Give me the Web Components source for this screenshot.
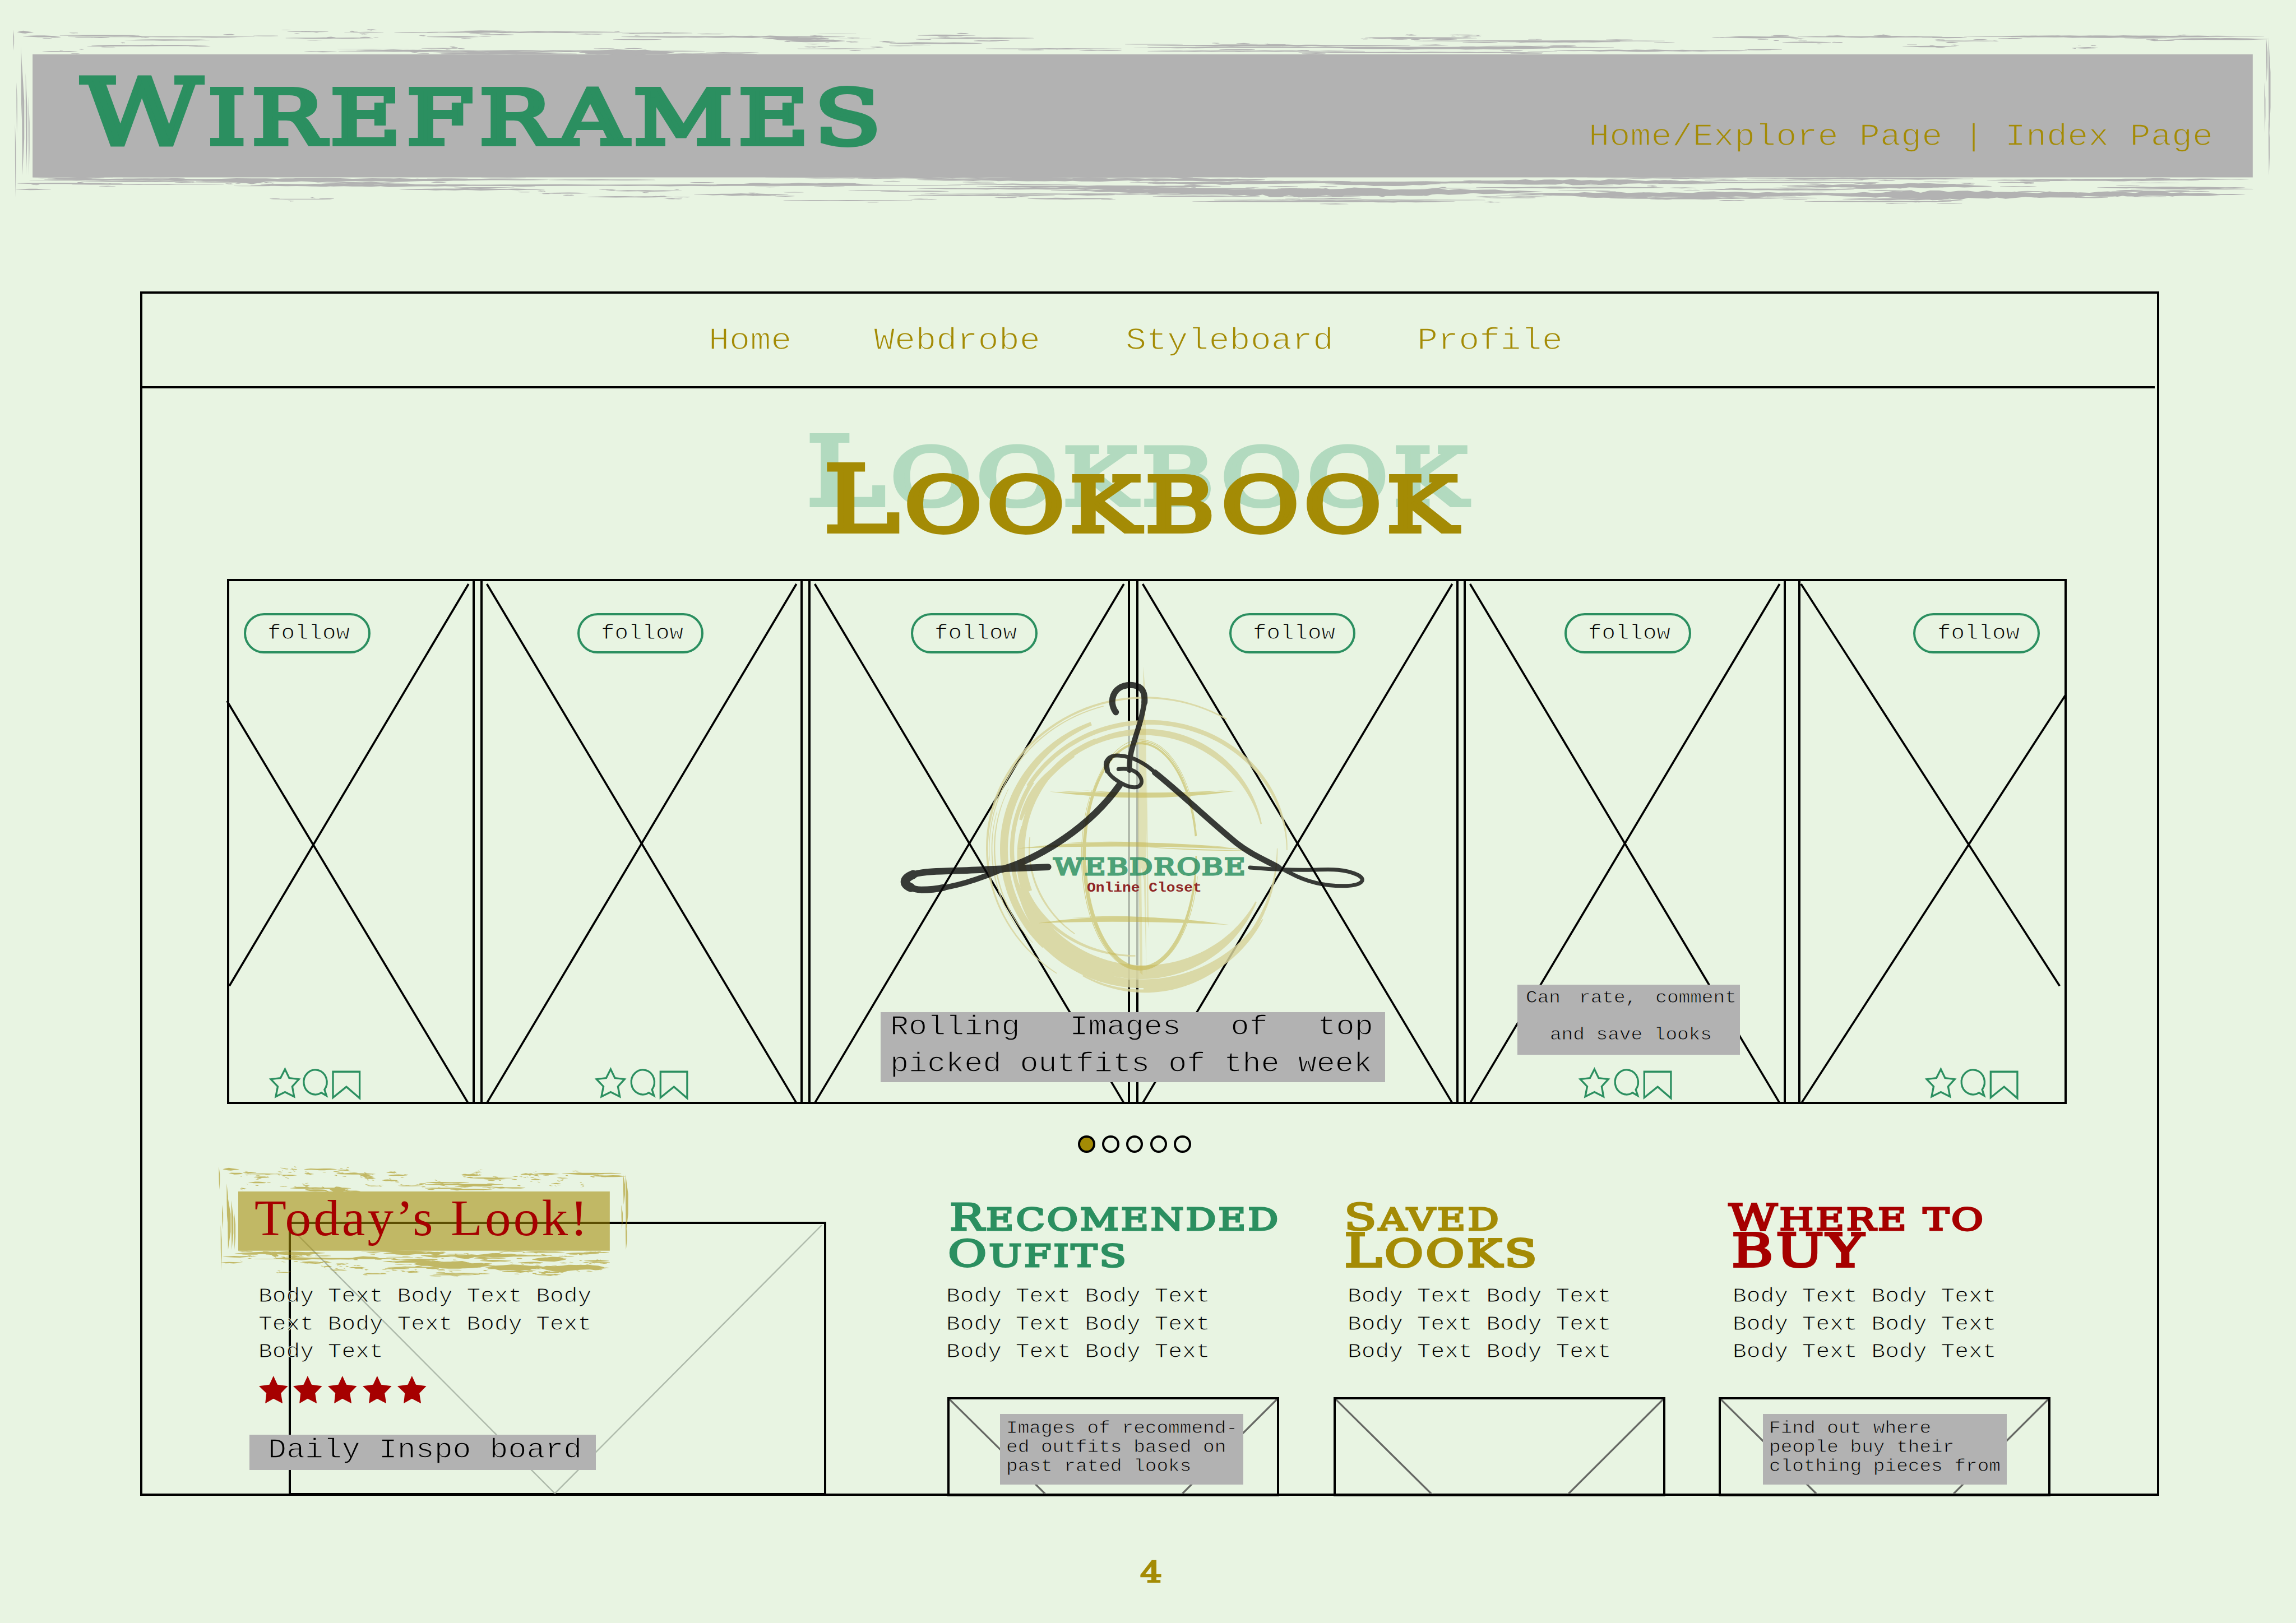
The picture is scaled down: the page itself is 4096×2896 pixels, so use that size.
<!DOCTYPE html>
<html lang="en">
<head>
<meta charset="utf-8">
<title>Wireframes</title>
<style>
  /* 1rem is one hundred units of the 4962-unit-wide board */
  html { font-size: calc(100vw / 49.62); background: #e8f4e2; }
  body { margin: 0; overflow: hidden; }
</style>
</head>
<body>
<wire-page></wire-page>
<script>
const GREEN = '#2b8f60', GOLD = '#a48b05', RED = '#a60000', GREY = '#b2b2b2', PAPER = '#e8f4e2';
const rem = n => (n / 100).toFixed(4) + 'rem';
const f1 = n => n.toFixed(1);

class Part extends HTMLElement {
  connectedCallback() {
    if (!this.shadowRoot) this.attachShadow({ mode: 'open' });
    this.shadowRoot.innerHTML = this.render();
  }
  num(name, fallback = 0) { return this.hasAttribute(name) ? parseFloat(this.getAttribute(name)) : fallback; }
  str(name, fallback = '') { return this.getAttribute(name) ?? fallback; }
}

/* Courier-like lines, separated by "~"; asc = box top to first baseline */
class MonoText extends Part {
  render() {
    const lines = this.str('text').split('~');
    const size = this.num('size', 50), lead = this.num('lead', size * 1.2), asc = this.num('asc', size * .75);
    const sy = .9, pitch = size * .6;
    const ws = this.str('ws').split(','), dx = this.str('dx').split(',');
    const w = Math.max(...lines.map((l, i) => l.length * pitch + (parseFloat(ws[i]) || 0) * (l.split(' ').length - 1)));
    const h = this.num('h', asc + lead * (lines.length - 1) + size * .25);
    const under = this.str('under', PAPER);
    const thin = `stroke="${under}" stroke-width="${(size * .028).toFixed(2)}"`;
    return `<style>:host{display:block;width:${rem(w)};height:${rem(h)}}svg{display:block;overflow:visible;width:100%;height:100%}
      text{font-family:"Liberation Mono","Courier New",monospace}</style>
      <svg viewBox="0 0 ${f1(w)} ${f1(h)}" preserveAspectRatio="xMinYMin">${lines.map((l, i) =>
        `<text transform="translate(${parseFloat(dx[i]) || 0} ${f1(asc + i * lead)}) scale(1 ${sy})" font-size="${size}" fill="${this.str('color', '#000')}" ${thin} word-spacing="${parseFloat(ws[i]) || 0}">${l}</text>`).join('')}</svg>`;
  }
}

/* Engraved small-caps lettering; capitals use the full height, lower-case letters the reduced one */
class PlateText extends Part {
  render() {
    const w = this.num('w'), cap = this.num('cap'), asc = this.num('asc', cap), h = this.num('h', asc);
    /* the outline thickens the hairlines, so the glyphs are drawn that much smaller */
    const sw = cap * .062, big = (cap - sw) / .729, small = big * this.num('ratio', .825);
    const body = this.str('text').replace(/[a-z ]+/g, m => `<tspan font-size="${f1(small)}">${m}</tspan>`);
    return `<style>:host{display:block;width:${rem(w)};height:${rem(h)}}svg{display:block;overflow:visible;width:100%;height:100%}
      text{font-family:"DejaVu Serif",serif;font-weight:400;text-transform:uppercase}</style>
      <svg viewBox="0 0 ${w} ${h}" preserveAspectRatio="xMinYMin"><text x="0" y="${f1(asc - sw / 2)}" font-size="${f1(big)}" fill="${this.str('color')}" stroke="${this.str('color')}" stroke-width="${f1(sw)}" letter-spacing="${f1(cap * .06)}" textLength="${w}" lengthAdjust="spacingAndGlyphs">${body}</text></svg>`;
  }
}

class SerifText extends Part {
  render() {
    const w = this.num('w'), size = this.num('size'), asc = this.num('asc'), h = this.num('h', asc);
    return `<style>:host{display:block;width:${rem(w)};height:${rem(h)}}svg{display:block;overflow:visible;width:100%;height:100%}
      text{font-family:"Liberation Serif","Times New Roman",serif}</style>
      <svg viewBox="0 0 ${w} ${h}"><text y="${asc}" font-size="${size}" fill="${this.str('color')}" letter-spacing="${this.num('ls')}" textLength="${w}" lengthAdjust="spacingAndGlyphs">${this.str('text')}</text></svg>`;
  }
}

/* Panel with dry-brush edges. Streaks are [x0, x1, y, thickness]; x runs 0..1000 along the
   panel, y is the distance from its top (negative) or bottom (positive) edge. */
const TOP_STREAKS = [[-8,0,-48,4],[216,251,-49,1.2],[265,298,-48,1],[335,500,-48,3],[500,560,-46,1.5],[23,90,-41,2],[-5,22,-39,3],[30,188,-38,1.3],
 [78,150,-31,2.4],[50,140,-19,3],[8,37,-6,1.8],[215,288,-35,2],[335,378,-38,2.4],[500,690,-38,3.4],[620,672,-34,5],[640,690,-29,4],[752,800,-41,2.4],
 [762,850,-35,2.2],[728,806,-24,3],[260,570,-7,3],[464,545,-4,10],[340,450,-3,3.6],[530,615,-1,1.6],[275,355,-9,1.5],[810,925,-12,1.4],[650,715,-12,1],[330,360,-13,1]]
 .map(([a, b, y, t]) => [a < 0 ? a : a * .53, b * .53, y, t]).concat([
 [600,646,-36,2],[602,650,-35,1.7],[638,652,-42,1.2],[760,795,-37,4],[795,860,-38,3],[870,1003,-39,2.4],[890,980,-38,3.6],[960,1004,-33,3],
 [622,735,-29,2],[660,715,-27,1.8],[502,620,-19,2.8],[520,556,-19,3.4],[502,712,-15,1.8],[590,683,-13,4],[685,772,-8,3],[502,600,-7,2],[570,680,-4,2],
 [842,866,-17,1.8],[857,883,-29,1.4],[788,810,-26,1.8],[920,930,-14,2]]);
const BOTTOM_STREAKS = [[0,36,1,2],[5,232,5,5],[75,198,6,6],[-2,110,6,1.8],[88,105,9,8],[128,165,12,3],[98,418,17,2.6],[98,210,17,5],[308,378,15,5],[-8,35,13,2.2],
 [165,230,26,3],[-9,8,26,2],[108,134,47,1],[330,520,1,2.5],[398,530,5,6],[425,530,20,4],[398,550,24,4],[472,560,29,9],[298,340,37,3.4],[400,560,36,2],[448,486,46,3],
 [228,250,34,2],[260,292,29,2],[338,396,50,1.4],[250,288,42,2],[394,460,39,2],[502,555,5,5.5],[502,830,11,3.6],[635,760,10,9],[582,634,14,6],[500,680,31,13],
 [520,645,33,15],[665,830,36,8],[680,800,38,9],[810,996,37,9],[808,914,38,15],[910,984,36,8],[790,882,19,7.6],[650,734,22,3],[502,535,19,1.6],[825,874,16,5],
 [930,996,22,3],[945,1000,25,2],[880,970,6,3.4],[772,874,3,3],[710,786,45,3.4],[815,864,47,3.2],[522,640,52,1.8],[798,864,52,1.6],[532,654,49,1.8],[502,568,13,2],[752,820,26,3],
 [930,998,4,2],[700,770,1,2]];
const SIDES = [[-41,-54,-8,1],[-24,-18,140,1.4],[-34,60,170,1],[-22,20,262,4],[-14,40,262,2.4],[-8,90,262,1.4],[-37,150,290,1]];
const SIDES_R = [[35,-37,190,3.4],[30,-37,60,2],[26,60,170,1.4],[35,140,262,1.6]];

class BrushPanel extends Part {
  render() {
    const w = this.num('w'), h = this.num('h'), alpha = this.num('alpha', 1), color = this.str('color');
    let seed = 41;
    const rnd = () => (seed = (seed * 16807) % 2147483647) / 2147483647;
    const sliver = (x0, x1, y, t) => {
      const n = Math.max(5, Math.min(34, Math.round((x1 - x0) / 20)));
      const up = [], dn = [];
      for (let i = 0; i <= n; i++) {
        const k = i / n, x = x0 + (x1 - x0) * k, p = Math.pow(Math.sin(Math.PI * k), .7) * t / 2;
        up.push(`${f1(x)},${f1(y - p * (.45 + rnd() * .8) - .3)}`);
        dn.unshift(`${f1(x + rnd() * 5)},${f1(y + p * (.45 + rnd() * .8) + .3)}`);
      }
      return 'M' + up.concat(dn).join('L') + 'Z';
    };
    let d = '';
    const X = v => v < 0 ? v * 4.2 : v > 1000 ? w + (v - 1000) * 8 : v / 1000 * w;
    const add = (list, oy) => list.forEach(([a, b, y, t]) => {
      d += sliver(X(a), X(b), oy + y, t * 1.2);
      /* stray bristles beside every main streak */
      const m = t > 3 ? 6 : 4;
      for (let i = 0; i < m; i++) {
        const c = a + (b - a) * (rnd() * 1.3 - .15), l = (b - a) * (.05 + rnd() * .2);
        const yy = y + (rnd() - .5) * (t + 10), tt = .5 + rnd() * 1.5;
        if (c > 985 || c < 0) continue;
        if (oy ? yy > 0 : yy < -1) d += sliver(X(Math.max(-6, c - l / 2)), X(Math.min(998, c + l / 2)), oy + yy, tt);
      }
    });
    add(TOP_STREAKS, 0);
    add(BOTTOM_STREAKS, h);
    const k = this.num('side', 1), s = h / 266;
    SIDES.concat(SIDES_R.map(([x, a, b, t]) => [x + w, a, b, t])).forEach(([x, a, b, t]) => {
      const y0 = a < 0 ? a : a * s, y1 = b > 262 ? h + b - 262 + 15 : b * s, q = t * k;
      d += `M${x - 1},${f1(y0)}L${f1(x + q)},${f1((y0 * 2 + y1) / 3)}L${f1(x + q)},${f1((y0 + y1 * 2) / 3)}L${x},${f1(y1)}L${f1(x - .8)},${f1((y0 + y1) / 2)}Z`;
    });
    return `<style>
      :host{display:block;position:relative;width:${rem(w)};height:${rem(h)}}
      svg{position:absolute;inset:0;width:100%;height:100%;overflow:visible}
      .in{position:relative;display:flex;height:100%;justify-content:space-between;align-items:flex-start}
    </style>
    <svg viewBox="0 0 ${w} ${h}" fill="${color}" opacity="${alpha}"><path d="M0 0H${w}V${h}H0Z"/><path d="${d}"/></svg>
    <div class="in"><slot></slot></div>`;
  }
}

class FollowPill extends Part {
  render() {
    return `<style>:host{box-sizing:border-box;display:flex;align-items:flex-start;width:2.735rem;height:.87rem;border:.0485rem solid ${GREEN};border-radius:.44rem;padding:.14rem 0 0 .465rem}</style>
      <mono-text text="follow" size="49.5" asc="38"></mono-text>`;
  }
}

class RateIcons extends Part {
  render() {
    const g = this.num('gap', 0);
    return `<style>:host{display:block;width:2.4rem;height:.72rem}svg{display:block;width:100%;height:100%;overflow:visible}</style>
      <svg viewBox="60 48 720 216" fill="none" stroke="${GREEN}" stroke-width="12" stroke-miterlimit="10">
        <path d="M167 62 194 119 257 127 214 174 226 240 167 210 107 240 120 174 75 127 138 119Z"/>
        <g transform="translate(${g * 3} 0)">
          <path d="M402 214.500A75 80 0 1 1 423 194.500L436 234Z"/>
          <path d="M478 78H651V250L565 176 478 246Z"/>
        </g>
      </svg>`;
  }
}

class LookCard extends Part {
  render() {
    const l = this.num('left'), w = this.num('width');
    const segs = this.str('lines').split(';').map(s => { const p = s.split(','); return `<path d="M${p[0]} ${p[1]}L${p[2]} ${p[3]}"/>`; }).join('');
    const icons = this.hasAttribute('icons') ? `<rate-icons gap="${this.num('gap', 4)}" style="margin-left:${rem(this.num('icons') - l - 5)}"></rate-icons>` : '';
    return `<style>
      :host{box-sizing:border-box;position:relative;display:flex;flex-direction:column;justify-content:space-between;height:100%;padding:.69rem 0 .035rem;border:solid #000;border-width:0 .0485rem}
      svg{position:absolute;left:-.0485rem;top:0;width:${rem(w)};height:${rem(1131)};overflow:visible}
      follow-pill,rate-icons{position:relative}
    </style>
    <svg viewBox="${l} 1256 ${w} 1131" stroke="#000" stroke-width="4.4">${segs}</svg>
    <follow-pill style="margin-left:${rem(this.num('pill') - l - 5)}"></follow-pill>${icons}`;
  }
}

class NoteBox extends Part {
  render() {
    return `<style>:host{display:block;box-sizing:border-box;background:${GREY}}</style><slot></slot>`;
  }
}

class WebdrobeLogo extends Part {
  render() {
    const ring = (cx, cy, rx, ry, a0, a1, w0, w1, w2) => {
      /* widths w0, w1, w2 at the start, the middle and the end of the sweep */
      const o = [], i = [], n = 60;
      for (let s = 0; s <= n; s++) {
        const k = s / n, a = (a0 + (a1 - a0) * k) * Math.PI / 180;
        const b = k < .5 ? w0 + (w1 - w0) * Math.sin(k * Math.PI) : w2 + (w1 - w2) * Math.sin(k * Math.PI);
        const c = Math.cos(a), d = Math.sin(a);
        o.push(`${f1(cx + (rx + b / 2 / .7015) * c)},${f1(cy + (ry + b / 2 / .4975) * d)}`);
        i.unshift(`${f1(cx + (rx - b / 2 / .7015) * c)},${f1(cy + (ry - b / 2 / .4975) * d)}`);
      }
      return `<path d="M${o.concat(i).join('L')}Z"/>`;
    };
    const rings = [
      ring(820, 830, 487, 655, -59, -236, 3, 5, 2),
      ring(815, 830, 475, 640, -105, -185, 2, 2.6, 1),
      ring(830, 838, 427, 556, 0, -150, 2, 10, 9),
      ring(820, 838, 410, 560, -148, -250, 9, 9, 14),
      ring(815, 840, 372, 516, -13, -130, 3, 14, 8),
      ring(815, 835, 430, 590, -112, -225, 8, 17, 14),
      ring(815, 838, 374, 520, -113, -200, 8, 12, 12),
      ring(812, 838, 386, 530, -190, -335, 8, 30, 3),
      ring(812, 838, 424, 580, -200, -332, 8, 19, 2),
      ring(815, 838, 402, 556, -195, -260, 6, 26, 4),
      ring(790, 850, 360, 447, -165, -270, 5, 7, 3),
      ring(815, 830, 352, 465, -174, -233, 2, 4, 2),
      ring(815, 830, 392, 478, -123, -165, 4, 15, 6),
      ring(815, 830, 459, 612, -155, -222, 1, 3, 1),
      ring(815, 830, 467, 622, -165, -215, 1, 2.4, 1),
      ring(815, 830, 412, 620, 0, 117, 1.5, 9, 3),
      ring(815, 838, 424, 600, 30, 90, 2, 10, 12),
    ].join('');
    const lens = (x0, y0, xm, ym, x1, y1, t) => `<path d="M${x0} ${y0}Q${xm} ${ym * 2 - (y0 + y1) / 2 - t} ${x1} ${y1}Q${xm} ${ym * 2 - (y0 + y1) / 2 + t} ${x0} ${y0}Z"/>`;
    const globe = [
      ring(805, 862, 173, 489, 170, 350, 8, 5, 3), ring(805, 862, 172, 489, 0, 175, 3, 9, 8),
      ring(807, 858, 178, 500, 185, 330, 1, 1.4, 1), ring(803, 862, 179, 497, 60, 215, 1.4, 1.6, 1), ring(809, 862, 172, 497, 270, 350, 2, 2, 1.4), ring(807, 866, 177, 490, 10, 100, 1, 1.6, 1),
      lens(525, 583, 815, 601, 1102, 580, 18), lens(545, 580, 830, 592, 1075, 577, 8), lens(570, 590, 830, 603, 1060, 584, 10), lens(625, 577, 800, 590, 1000, 585, 4),
      lens(425, 830, 770, 814, 1130, 835, 16), lens(470, 823, 740, 808, 1090, 826, 9), lens(560, 808, 730, 803, 900, 812, 4), lens(800, 822, 1000, 836, 1150, 838, 5),
      lens(490, 1155, 760, 1140, 1080, 1162, 18), lens(510, 1150, 740, 1133, 1050, 1155, 10), lens(595, 1132, 740, 1127, 900, 1138, 5)
    ].join('');
    const strand = 'M741 553C650 735 500 870 378 922C290 975 200 1010 130 1010C75 1005 70 960 110 942C150 925 250 930 340 921L521 911';
    return `<style>:host{display:block;width:11rem;height:7.8rem}svg{display:block;width:100%;height:100%;overflow:visible}
      .plate{font-family:"DejaVu Serif",serif;font-weight:400}.mono{font-family:"Liberation Mono",monospace;font-weight:700}
      .h path{vector-effect:non-scaling-stroke}</style>
    <svg viewBox="0 0 1100 780">
      <g transform="scale(.70153 .49745)">
        <path d="M764 275H802V1400H764Z" fill="${PAPER}" opacity=".76"/>
        <g fill="#d8d49c" opacity=".84">${rings}</g>
        <g fill="#c3b448" opacity=".55">${globe}</g>
        <g fill="#cdbb5a" opacity=".32"><path d="M800 290H822L826 700 822 990 815 960 806 900Z"/><path d="M797 600 805 560 812 1380 804 1370Z"/><path d="M814 40 820 130 824 1380 815 900Z"/><path d="M826 500 831 1180 826 1130Z"/></g>
      </g>
      <g class="h" opacity=".8" fill="none" stroke="#0c0c0c" stroke-linecap="round" stroke-linejoin="round">
        <g transform="scale(.70153 .49745)">
          <path d="M730 240C708 200 716 122 775 120C832 122 820 190 810 250C798 330 768 410 772 490" stroke-width="9.4"/>
          <path d="M730 238C708 200 716 122 775 120C812 122 820 150 818 195" stroke-width="11"/>
          <path d="M738 486C790 475 814 520 808 548C795 592 722 540 704 494C688 450 710 422 742 427C780 430 820 460 850 500C930 590 1010 700 1100 805C1150 860 1210 895 1268 938C1330 985 1390 995 1440 993C1490 990 1502 965 1475 945C1430 915 1380 922 1340 923C1280 925 1200 920 1143 913" stroke-width="7"/>
          <path d="M850 500C930 590 1010 700 1100 805C1150 860 1190 880 1230 912" stroke-width="10.5"/>
          <path d="${strand}" stroke-width="9.5"/>
          <path d="M741 555C650 735 500 870 378 922" stroke-width="12"/>
          <path d="M200 1000C175 1008 150 1010 130 1010C75 1005 70 960 110 942C150 925 250 930 340 921L521 911" stroke-width="11.8"/>
          <path d="M98 1000C72 985 76 960 105 944" stroke-width="16"/>
          <path d="M704 494C700 470 700 450 712 438" stroke-width="9"/>
        </g>
      </g>
      <text class="plate" x="377.500" y="469.5" font-size="49.5" fill="${GREEN}" stroke="${GREEN}" stroke-width="3.4" opacity=".82" letter-spacing="2" textLength="417" lengthAdjust="spacingAndGlyphs">WEBDROBE</text>
      <text class="mono" x="449.5" y="506.5" font-size="31.6" fill="#8f2626" textLength="248" lengthAdjust="spacingAndGlyphs" transform="translate(0 50.6) scale(1 .9)">Online Closet</text>
    </svg>`;
  }
}

class PageDots extends Part {
  render() {
    return `<style>:host{display:flex;gap:.148rem;height:.38rem}i{box-sizing:border-box;width:.37rem;height:.38rem;border:.0485rem solid #000;border-radius:50%}i.on{background:${GOLD}}</style>` +
      Array.from({ length: 5 }, (_, i) => `<i class="${i ? '' : 'on'}"></i>`).join('');
  }
}

class StarRow extends Part {
  render() {
    return `<style>:host{display:flex;gap:.12rem}svg{width:.63rem;height:.6rem}</style>` +
      `<svg viewBox="0 0 63 60" fill="${RED}"><path d="M31.3 0 40 19 62.5 22 47.5 37.5 51 59.6 31.3 49.5 13.5 59.6 16 37.5 0 22 22.5 19Z"/></svg>`.repeat(5);
  }
}

class LinkColumn extends Part {
  render() {
    return `<style>
      :host{display:flex;flex-direction:column;position:relative;width:7.17rem;height:6.59rem}
      .thumb{box-sizing:border-box;position:relative;margin-top:auto;height:2.15rem;border:.0485rem solid #000}
      svg{position:absolute;left:0;top:0;width:100%;height:100%}
    </style><slot></slot>
    <div class="thumb"><svg viewBox="0 0 708 205" preserveAspectRatio="none" stroke="#666864" stroke-width="4"><path d="M0 0 208 205M708 0 502 205"/></svg><slot name="note"></slot></div>`;
  }
}

class InspoBoard extends Part {
  render() {
    return `<style>
      :host{display:flex;flex-direction:column;position:relative;width:12.7rem;height:6.54rem}
      .frame{box-sizing:border-box;position:absolute;left:1.085rem;top:.648rem;width:11.62rem;height:5.91rem;border:.0485rem solid #000}
      svg{position:absolute;left:-.1rem;top:.03rem;width:11.62rem;height:5.8rem}
      ::slotted(*){position:relative}
    </style>
    <div class="frame"><svg viewBox="0 0 1162 580" stroke="#aebaab" stroke-width="3" fill="none"><path d="M3 0 580 580 1157 0"/></svg></div>
    <slot></slot>`;
  }
}

class WirePage extends Part {
  render() {
    const X = (l, r) => `${l + 14},1262,${r - 14},2384;${r - 14},1262,${l + 14},2384`;
    return `<style>
      :host{box-sizing:border-box;display:flex;flex-direction:column;width:49.62rem;height:35.08rem;background:${PAPER};padding:1.17rem 0 0 .702rem;overflow:hidden}
      .site{box-sizing:border-box;display:flex;flex-direction:column;width:43.642rem;height:26.03rem;margin:2.473rem 0 0 2.321rem;border:.0485rem solid #000}
      nav{box-sizing:border-box;display:flex;flex:none;gap:1.78rem;width:43.5rem;height:2.04rem;border-bottom:.0485rem solid #000;padding:.63rem 0 0 12.24rem}
      .title{display:grid;flex:none;height:4.12rem}
      .title>*{grid-area:1/1}
      .gallery{box-sizing:border-box;position:relative;display:grid;flex:none;margin-left:1.84rem;width:39.75rem;height:11.36rem;border:solid #000;border-width:.06rem 0 .0485rem;
        grid-template-columns:5.353rem .112rem 6.974rem .121rem 6.957rem .122rem 6.968rem .114rem 6.966rem .266rem 5.796rem;justify-content:start}
      .over{position:absolute}
      .lower{display:flex;flex:none;margin:.84rem 0 0 2.08rem}
      .foot{margin:1.4rem 0 0 23.94rem}
    </style>
    <brush-panel w="4798.4" h="266" color="${GREY}">
      <plate-text text="Wireframes" w="1740" cap="154" asc="199" color="${GREEN}" style="margin-left:1.06rem"></plate-text>
      <mono-text text="Home/Explore Page | Index Page" size="75" asc="196" color="${GOLD}" under="${GREY}" style="margin-right:.85rem"></mono-text>
    </brush-panel>
    <main class="site">
      <nav>
        <mono-text text="Home" size="75" asc="57" color="${GOLD}"></mono-text>
        <mono-text text="Webdrobe" size="75" asc="57" color="${GOLD}"></mono-text>
        <mono-text text="Styleboard" size="75" asc="57" color="${GOLD}" style="margin-left:.06rem"></mono-text>
        <mono-text text="Profile" size="75" asc="57" color="${GOLD}" style="margin-left:.02rem"></mono-text>
      </nav>
      <div class="title">
        <plate-text text="Lookbook" w="1440" cap="160" asc="257" color="#b2dabf" style="margin-left:14.35rem"></plate-text>
        <plate-text text="Lookbook" w="1381" cap="154" asc="314" color="${GOLD}" style="margin-left:14.73rem"></plate-text>
      </div>
      <section class="gallery">
        <look-card left="491" width="535" pill="527" icons="580" gap="0" lines="1013,1262,496,2131;491,1515,1012,2384"></look-card><span></span>
        <look-card left="1038" width="697" pill="1248" icons="1284.5" lines="${X(1038, 1735)}"></look-card><span></span>
        <look-card left="1747" width="696" pill="1968.5" lines="${X(1747, 2443)}"></look-card><span></span>
        <look-card left="2455" width="697" pill="2656.5" lines="${X(2455, 3152)}"></look-card><span></span>
        <look-card left="3163" width="697" pill="3381" icons="3410" lines="${X(3163, 3860)}"></look-card><span></span>
        <look-card left="3887" width="580" pill="4136" icons="4160" lines="3893,1262,4452,2131;4464,1503,3894,2384"></look-card>
        <webdrobe-logo class="over" style="left:14.09rem;top:1.65rem"></webdrobe-logo>
        <note-box class="over" style="left:14.124rem;top:9.32rem;width:10.9rem;height:1.517rem;padding:.02rem .2rem">
          <mono-text text="Rolling Images of top~picked outfits of the week" size="66.8" lead="80" asc="46" ws="67.5,0" under="${GREY}"></mono-text>
        </note-box>
        <note-box class="over" style="left:27.88rem;top:8.72rem;width:4.807rem;height:1.517rem;padding:.04rem .19rem">
          <mono-text text="Can rate, comment~and save looks" size="41.7" lead="80" asc="35" ws="15,0" dx="0,52" under="${GREY}"></mono-text>
        </note-box>
      </section>
      <page-dots style="margin:.67rem 0 0 20.23rem"></page-dots>
      <section class="lower">
        <inspo-board>
          <brush-panel w="803" h="128" color="${GOLD}" alpha=".56" side="1.4"></brush-panel>
          <serif-text text="Today’s Look!" w="725" size="110" ls="5" asc="95" h="128" color="${RED}" style="position:absolute;left:.35rem;top:0"></serif-text>
          <mono-text text="Body Text Body Text Body~Text Body Text Body Text~Body Text" size="50" lead="59.9" asc="38" style="margin:.73rem 0 0 .43rem"></mono-text>
          <star-row style="margin:.265rem 0 0 .44rem"></star-row>
          <note-box style="width:7.484rem;height:.765rem;margin:.67rem 0 0 .24rem;padding:.02rem 0 0 .4rem">
            <mono-text text="Daily Inspo board" size="66.6" asc="49" under="${GREY}"></mono-text>
          </note-box>
        </inspo-board>
        <link-column style="margin-left:2.62rem">
          <plate-text text="Recomended" w="715" cap="62" asc="85" h="89" color="${GREEN}" style="margin-left:.05rem"></plate-text>
          <plate-text text="Oufits" w="390" cap="62" asc="75" h="112" color="${GREEN}" style="margin-left:.02rem"></plate-text>
          <mono-text text="Body Text Body Text~Body Text Body Text~Body Text Body Text" size="50" lead="59.8" asc="38" style="margin-left:-.02rem"></mono-text>
          <note-box slot="note" style="position:relative;width:5.265rem;height:1.517rem;margin:.32rem 0 0 1.09rem;padding:.03rem .13rem">
            <mono-text text="Images of recommend-~ed outfits based on~past rated looks" size="41.7" lead="41.4" asc="37.5" under="${GREY}"></mono-text>
          </note-box>
        </link-column>
        <link-column style="margin-left:1.175rem">
          <plate-text text="Saved" w="339" cap="62" asc="85" h="89" color="${GOLD}" style="margin-left:.23rem"></plate-text>
          <plate-text text="Looks" w="422" cap="77" asc="75" h="112" color="${GOLD}" style="margin-left:.24rem"></plate-text>
          <mono-text text="Body Text Body Text~Body Text Body Text~Body Text Body Text" size="50" lead="59.8" asc="38" style="margin-left:.31rem"></mono-text>
        </link-column>
        <link-column style="margin-left:1.16rem">
          <plate-text text="Where to" w="555" cap="62" asc="85" h="89" color="${RED}" style="margin-left:.21rem"></plate-text>
          <plate-text text="BUY" w="292" cap="77" asc="75" h="112" color="${RED}" style="margin-left:.28rem"></plate-text>
          <mono-text text="Body Text Body Text~Body Text Body Text~Body Text Body Text" size="50" lead="59.8" asc="38" style="margin-left:.3rem"></mono-text>
          <note-box slot="note" style="position:relative;width:5.262rem;height:1.517rem;margin:.32rem 0 0 .91rem;padding:.03rem .13rem">
            <mono-text text="Find out where~people buy their~clothing pieces from" size="41.7" lead="41.4" asc="37.5" under="${GREY}"></mono-text>
          </note-box>
        </link-column>
      </section>
    </main>
    <plate-text class="foot" text="4" w="51" cap="48" asc="48" color="${GOLD}"></plate-text>`;
  }
}

Object.entries({
  'mono-text': MonoText, 'plate-text': PlateText, 'serif-text': SerifText, 'brush-panel': BrushPanel,
  'follow-pill': FollowPill, 'rate-icons': RateIcons, 'look-card': LookCard, 'note-box': NoteBox,
  'webdrobe-logo': WebdrobeLogo, 'page-dots': PageDots, 'star-row': StarRow, 'link-column': LinkColumn,
  'inspo-board': InspoBoard, 'wire-page': WirePage
}).forEach(([tag, cls]) => customElements.define(tag, cls));
</script>
</body>
</html>
